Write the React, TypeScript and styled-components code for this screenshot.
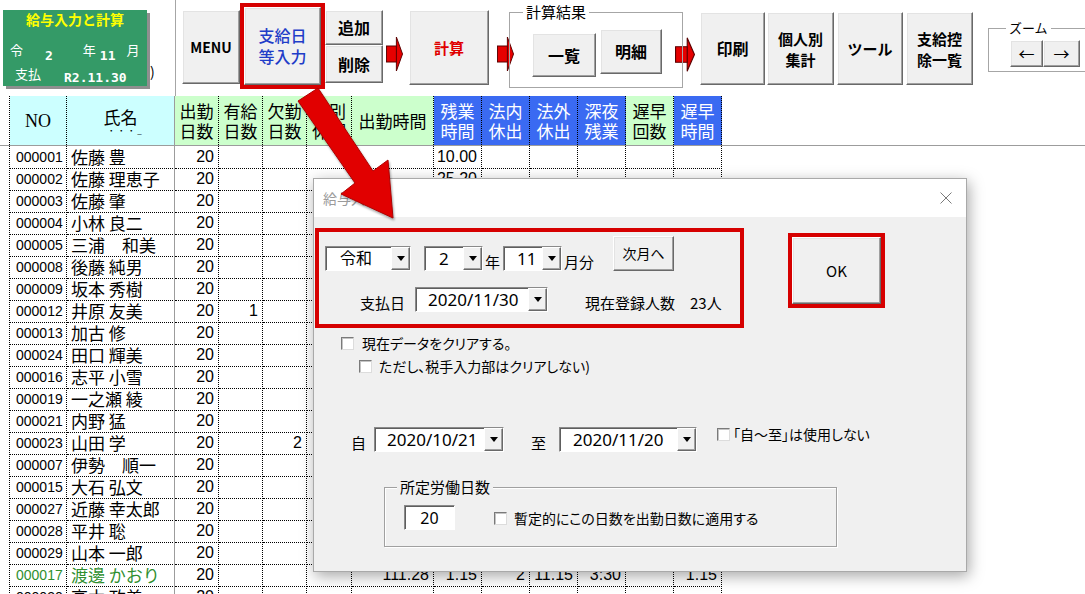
import React from 'react';
import styled, { createGlobalStyle, css } from 'styled-components';

const JP = `"Noto Sans CJK JP", "Noto Sans", sans-serif`;
const LATIN = `"Liberation Sans", "Noto Sans CJK JP", sans-serif`;
const UI = `"Noto Sans", "Noto Sans CJK JP", sans-serif`;
const COLS = '10px 57px 108px 44px 44px 44px 45px 82px 48px 48px 48px 48px 48px 48px 1fr';

const GREEN = '#ccffcc';
const BLUE = '#3a6af2';
const CYAN = '#ccffff';

const GlobalStyle = createGlobalStyle`
  * { box-sizing: border-box; }
  html, body { margin: 0; padding: 0; background: #fff; }
  body { font-family: ${JP}; color: #000; }
`;

const Screen = styled.div`
  position: relative;
  width: 1085px;
  height: 594px;
  overflow: hidden;
  background: #fff;
`;

/* ---------- toolbar ---------- */

const Toolbar = styled.div`
  display: flex;
  align-items: flex-start;
  height: 96px;
`;

const TitleCard = styled.div`
  flex: none;
  margin: 10px 0 0 3px;
  width: 144px;
  height: 76px;
  background: #349a67;
  box-shadow: 3px 3px 0 #8f8f8f;
  color: #fff;
`;

const CardTitle = styled.div`
  color: #ffff00;
  font-weight: 700;
  font-size: 14px;
  line-height: 18px;
  text-align: center;
`;

const CardLine = styled.div<{ $mt: number; $pl: number }>`
  display: flex;
  align-items: flex-start;
  height: 18px;
  margin-top: ${p => p.$mt}px;
  padding-left: ${p => p.$pl}px;
`;

const CardWord = styled.span<{ $ml?: number }>`
  margin-left: ${p => p.$ml ?? 0}px;
  font-size: 13px;
  line-height: 18px;
`;

const CardNum = styled.span<{ $ml?: number; $dy: number }>`
  margin: ${p => p.$dy}px 0 0 ${p => p.$ml ?? 0}px;
  font-family: "DejaVu Sans Mono", monospace;
  font-weight: 700;
  font-size: 13px;
  line-height: 18px;
`;

const Paren = styled.div`
  flex: none;
  width: 28px;
  margin-top: 62px;
  padding-left: 3px;
  font-size: 14px;
  line-height: 18px;
`;

const PaneLine = styled.div`
  flex: none;
  width: 1px;
  height: 96px;
  background: #a6a6a6;
`;

const Btn = styled.button<{
  $w: number;
  $h: number;
  $mt?: number;
  $ml?: number;
  $color?: string;
  $fs?: number;
  $weight?: number;
}>`
  flex: none;
  display: flex;
  align-items: center;
  justify-content: center;
  width: ${p => p.$w}px;
  height: ${p => p.$h}px;
  margin: ${p => p.$mt ?? 0}px 0 0 ${p => p.$ml ?? 0}px;
  padding: 0;
  background: #f0f0f0;
  border: 1px solid;
  border-color: #ffffff #696969 #696969 #ffffff;
  box-shadow: inset -1px -1px 0 #a0a0a0, inset 1px 1px 0 #e3e3e3;
  font-family: ${JP};
  font-weight: ${p => p.$weight ?? 700};
  font-size: ${p => p.$fs ?? 16}px;
  line-height: 21px;
  color: ${p => p.$color ?? '#000'};
  text-align: center;
  white-space: nowrap;
  cursor: default;
`;

const Mark = styled.div<{ $mt?: number; $ml?: number }>`
  flex: none;
  display: flex;
  margin: ${p => p.$mt ?? 0}px 0 0 ${p => p.$ml ?? 0}px;
  border: 4px solid #d60000;
`;

const BtnStack = styled.div`
  flex: none;
  display: flex;
  flex-direction: column;
  margin-top: 10px;
`;

const FlowArrowSvg = styled.svg<{ $mt: number; $ml: number }>`
  flex: none;
  margin: ${p => p.$mt}px 0 0 ${p => p.$ml}px;
  overflow: visible;
`;

const FlowArrow = ({ w, h, mt, ml }: { w: number; h: number; mt: number; ml: number }) => (
  <FlowArrowSvg width={w} height={h} viewBox="0 0 18 36" preserveAspectRatio="none" $mt={mt} $ml={ml}>
    <rect x="0.5" y="10" width="11" height="16" fill="#e60000" stroke="#5a0000" />
    <polygon points="11,1 17.5,18 11,35" fill="#e60000" stroke="#5a0000" strokeLinejoin="round" />
  </FlowArrowSvg>
);

const Frame = styled.div<{ $w: number; $h: number; $mt: number; $ml: number; $pl: number; $pt: number }>`
  position: relative;
  flex: none;
  display: flex;
  align-items: flex-start;
  width: ${p => p.$w}px;
  height: ${p => p.$h}px;
  margin: ${p => p.$mt}px 0 0 ${p => p.$ml}px;
  padding: ${p => p.$pt}px 0 0 ${p => p.$pl}px;
  border: 1px solid #a6a6a6;
`;

const FrameLabel = styled.span<{ $left: number; $fs: number; $bg: string }>`
  position: absolute;
  top: -10px;
  left: ${p => p.$left}px;
  padding: 0 3px;
  background: ${p => p.$bg};
  font-size: ${p => p.$fs}px;
  line-height: 18px;
  white-space: nowrap;
`;

/* ---------- sheet ---------- */

const GridRow = styled.div<{ $h: number }>`
  display: grid;
  grid-template-columns: ${COLS};
  height: ${p => p.$h}px;
`;

const Gutter = styled.div`
  border-right: 1px dotted #000;
`;

const HeadCell = styled.div<{ $bg: string; $fg?: string; $pane?: boolean; $serif?: boolean }>`
  display: flex;
  flex-direction: column;
  align-items: center;
  justify-content: center;
  background: ${p => p.$bg};
  color: ${p => p.$fg ?? '#000'};
  border-right: 1px ${p => (p.$pane ? 'solid #9c9c9c' : 'dotted #000')};
  font-family: ${p => (p.$serif ? `"Liberation Serif", serif` : JP)};
  font-size: ${p => (p.$serif ? 18 : 17)}px;
  line-height: 20px;
  white-space: nowrap;
`;

const Ruby = styled.span`
  font-size: 8px;
  line-height: 8px;
  letter-spacing: 2px;
  margin-left: 10px;
`;

const Body = styled.div`
  border-top: 1px solid #9c9c9c;
`;

const Cell = styled.div<{ $kind: 'no' | 'name' | 'num' | 'blank'; $green?: boolean; $pane?: boolean }>`
  white-space: nowrap;
  border-right: 1px ${p => (p.$pane ? 'solid #9c9c9c' : 'dotted #000')};
  border-bottom: 1px dotted #000;
  color: ${p => (p.$green ? '#2f8f2f' : '#000')};
  line-height: 22px;
  ${p =>
    p.$kind === 'no' &&
    css`
      font-family: ${LATIN};
      font-size: 14px;
      padding-left: 6px;
    `}
  ${p =>
    p.$kind === 'name' &&
    css`
      font-family: ${JP};
      font-size: 17px;
      line-height: 21px;
      padding-left: 4px;
    `}
  ${p =>
    p.$kind === 'num' &&
    css`
      font-family: ${LATIN};
      font-size: 16px;
      text-align: right;
      padding-right: 4px;
    `}
  ${p =>
    p.$kind === 'blank' &&
    css`
      border: none;
    `}
`;

/* ---------- dialog ---------- */

const Dialog = styled.div`
  position: absolute;
  left: 313px;
  top: 178px;
  width: 654px;
  height: 394px;
  display: flex;
  flex-direction: column;
  background: #f0f0f0;
  border: 1px solid #a9a9a9;
  box-shadow: 2px 4px 14px rgba(0, 0, 0, 0.35);
  font-family: ${JP};
  font-feature-settings: 'palt';
`;

const TitleBar = styled.div`
  flex: none;
  display: flex;
  align-items: center;
  justify-content: space-between;
  height: 38px;
  padding: 0 14px 0 9px;
  background: #fff;
  color: #9b9b9b;
  font-size: 14px;
`;

const DialogBody = styled.div`
  flex: 1;
  display: flex;
  flex-direction: column;
  align-items: flex-start;
`;

const TopRow = styled.div`
  display: flex;
  align-items: flex-start;
`;

const RedBox = styled.div`
  flex: none;
  display: flex;
  flex-direction: column;
  width: 429px;
  height: 100px;
  margin: 11px 0 0 1px;
  padding: 4px 0 0 6px;
  border: 4px solid #d60000;
`;

const FieldRow = styled.div<{ $h: number; $mt?: number; $pl?: number }>`
  display: flex;
  align-items: flex-end;
  height: ${p => p.$h}px;
  margin-top: ${p => p.$mt ?? 0}px;
  padding-left: ${p => p.$pl ?? 0}px;
`;

const Label = styled.span<{ $ml?: number; $fs?: number }>`
  flex: none;
  margin-left: ${p => p.$ml ?? 0}px;
  font-size: ${p => p.$fs ?? 15}px;
  line-height: 18px;
  white-space: nowrap;
`;

const Combo = styled.div<{ $w: number; $ml?: number }>`
  flex: none;
  display: flex;
  width: ${p => p.$w}px;
  height: 25px;
  margin-left: ${p => p.$ml ?? 0}px;
  background: #fff;
  border: 1px solid;
  border-color: #8a8a8a #ffffff #ffffff #8a8a8a;
  box-shadow: inset 1px 1px 0 #5e5e5e;
`;

const ComboText = styled.div<{ $fs: number; $pl?: number }>`
  flex: 1;
  overflow: hidden;
  padding-left: ${p => p.$pl ?? 13}px;
  font-family: ${UI};
  font-size: ${p => p.$fs}px;
  line-height: 23px;
  white-space: nowrap;
`;

const DropBtn = styled.div`
  flex: none;
  display: flex;
  align-items: center;
  justify-content: center;
  width: 19px;
  background: #f0f0f0;
  border: 1px solid;
  border-color: #ffffff #696969 #696969 #ffffff;
  box-shadow: inset -1px -1px 0 #a0a0a0;
  &::after {
    content: '';
    border-left: 4.5px solid transparent;
    border-right: 4.5px solid transparent;
    border-top: 5px solid #000;
  }
`;

const CheckRow = styled.div<{ $mt?: number; $pl?: number; $gap: number }>`
  display: flex;
  align-items: center;
  height: 16px;
  margin-top: ${p => p.$mt ?? 0}px;
  padding-left: ${p => p.$pl ?? 0}px;
  gap: ${p => p.$gap}px;
  font-size: 14px;
  line-height: 16px;
  white-space: nowrap;
`;

const CheckBox = styled.span`
  flex: none;
  width: 13px;
  height: 13px;
  background: #fff;
  border: 1px solid;
  border-color: #7a7a7a #dcdcdc #dcdcdc #7a7a7a;
  box-shadow: inset 1px 1px 0 #c4c4c4;
`;

const CheckInline = styled(CheckRow)<{ $ml: number }>`
  align-self: flex-start;
  height: 14px;
  margin-left: ${p => p.$ml}px;
`;

const WorkDaysBox = styled.div`
  position: relative;
  display: flex;
  align-items: center;
  width: 453px;
  height: 60px;
  margin: 35px 0 0 70px;
  padding: 0 0 15px 19px;
  border: 1px solid #a0a0a0;
  box-shadow: inset 1px 1px 0 #fff, 1px 1px 0 #fff;
`;

const NumInput = styled.div`
  flex: none;
  width: 51px;
  height: 25px;
  margin-top: 16px;
  background: #fff;
  border: 1px solid;
  border-color: #8a8a8a #ffffff #ffffff #8a8a8a;
  box-shadow: inset 1px 1px 0 #5e5e5e;
  font-family: ${UI};
  font-size: 16px;
  line-height: 24px;
  text-align: center;
`;

const Overlay = styled.svg`
  position: absolute;
  left: 0;
  top: 0;
  width: 1085px;
  height: 594px;
  pointer-events: none;
  filter: drop-shadow(1px 2px 1px rgba(0, 0, 0, 0.35));
`;

/* ---------- data ---------- */

const HEADS: { t: string[]; bg: string; fg?: string }[] = [
  { t: ['出勤', '日数'], bg: GREEN },
  { t: ['有給', '日数'], bg: GREEN },
  { t: ['欠勤', '日数'], bg: GREEN },
  { t: ['特別', '休暇'], bg: GREEN },
  { t: ['出勤時間'], bg: GREEN },
  { t: ['残業', '時間'], bg: BLUE, fg: '#fff' },
  { t: ['法内', '休出'], bg: BLUE, fg: '#fff' },
  { t: ['法外', '休出'], bg: BLUE, fg: '#fff' },
  { t: ['深夜', '残業'], bg: BLUE, fg: '#fff' },
  { t: ['遅早', '回数'], bg: GREEN },
  { t: ['遅早', '時間'], bg: BLUE, fg: '#fff' },
];

const r = (no: string, name: string, extra: Record<number, string> = {}, green = false) => ({
  no,
  name,
  green,
  v: Array.from({ length: 11 }, (_, i) => extra[i] ?? (i === 0 ? '20' : '')),
});

const ROWS = [
  r('000001', '佐藤 豊', { 5: '10.00' }),
  r('000002', '佐藤 理恵子', { 5: '25.20' }),
  r('000003', '佐藤 肇'),
  r('000004', '小林 良二'),
  r('000005', '三浦　和美'),
  r('000008', '後藤 純男'),
  r('000009', '坂本 秀樹'),
  r('000012', '井原 友美', { 1: '1' }),
  r('000013', '加古 修'),
  r('000024', '田口 輝美'),
  r('000016', '志平 小雪'),
  r('000019', '一之瀬 綾'),
  r('000021', '内野 猛'),
  r('000023', '山田 学', { 2: '2' }),
  r('000007', '伊勢　順一'),
  r('000015', '大石 弘文'),
  r('000027', '近藤 幸太郎'),
  r('000028', '平井 聡'),
  r('000029', '山本 一郎'),
  r('000017', '渡邊 かおり', { 4: '111.28', 5: '1.15', 6: '2', 7: '11.15', 8: '3:30', 10: '1.15' }, true),
  r('000030', '高木 政美'),
];

const Dropdown = ({ w, ml, fs, text, pl }: { w: number; ml?: number; fs: number; text: string; pl?: number }) => (
  <Combo $w={w} $ml={ml}>
    <ComboText $fs={fs} $pl={pl}>{text}</ComboText>
    <DropBtn />
  </Combo>
);

const App = () => {
  return (
    <Screen>
      <GlobalStyle />
      <Toolbar>
        <TitleCard>
          <CardTitle>給与入力と計算</CardTitle>
          <CardLine $mt={13} $pl={7}>
            <CardWord>令</CardWord>
            <CardNum $ml={22} $dy={6}>2</CardNum>
            <CardWord $ml={30}>年</CardWord>
            <CardNum $ml={4} $dy={6}>11</CardNum>
            <CardWord $ml={11}>月</CardWord>
          </CardLine>
          <CardLine $mt={6} $pl={12}>
            <CardWord>支払</CardWord>
            <CardNum $ml={23} $dy={4}>R2.11.30</CardNum>
          </CardLine>
        </TitleCard>
        <Paren>)</Paren>
        <PaneLine />
        <Btn $w={58} $h={74} $mt={10} $ml={6} $fs={14}>MENU</Btn>
        <Mark $mt={3}>
          <Btn $w={77} $h={78} $color="#1f3dc8" $weight={500}>
            支給日
            <br />
            等入力
          </Btn>
        </Mark>
        <BtnStack>
          <Btn $w={58} $h={35}>追加</Btn>
          <Btn $w={58} $h={38}>削除</Btn>
        </BtnStack>
        <FlowArrow w={17} h={36} mt={36} ml={3} />
        <Btn $w={80} $h={75} $mt={10} $ml={6} $color="#e00000" $fs={15}>計算</Btn>
        <FlowArrow w={17} h={36} mt={36} ml={8} />
        <Frame $w={174} $h={76} $mt={12} $ml={-5} $pl={22} $pt={0}>
          <FrameLabel $left={13} $fs={15} $bg="#fff">計算結果</FrameLabel>
          <Btn $w={64} $h={44} $mt={20}>一覧</Btn>
          <Btn $w={62} $h={45} $mt={16} $ml={4}>明細</Btn>
        </Frame>
        <FlowArrow w={20} h={35} mt={37} ml={-8} />
        <Btn $w={65} $h={73} $mt={12} $ml={5}>印刷</Btn>
        <Btn $w={67} $h={73} $mt={12} $ml={2} $fs={15}>
          個人別
          <br />
          集計
        </Btn>
        <Btn $w={66} $h={73} $mt={12} $ml={3} $fs={15}>ツール</Btn>
        <Btn $w={67} $h={73} $mt={12} $ml={3} $fs={15}>
          支給控
          <br />
          除一覧
        </Btn>
        <Frame $w={120} $h={44} $mt={28} $ml={15} $pl={21} $pt={11}>
          <FrameLabel $left={17} $fs={13} $bg="#fff">ズーム</FrameLabel>
          <Btn $w={33} $h={27} $weight={400}>←</Btn>
          <Btn $w={37} $h={27} $weight={400}>→</Btn>
        </Frame>
      </Toolbar>

      <GridRow $h={49}>
        <Gutter />
        <HeadCell $bg={CYAN} $serif>NO</HeadCell>
        <HeadCell $bg={CYAN} $pane>
          <span>氏名</span>
          <Ruby>・・・_</Ruby>
        </HeadCell>
        {HEADS.map((h, i) => (
          <HeadCell key={i} $bg={h.bg} $fg={h.fg}>
            {h.t.map(line => (
              <span key={line}>{line}</span>
            ))}
          </HeadCell>
        ))}
        <div />
      </GridRow>

      <Body>
        {ROWS.map(row => (
          <GridRow $h={22} key={row.no}>
            <Gutter />
            <Cell $kind="no" $green={row.green}>{row.no}</Cell>
            <Cell $kind="name" $green={row.green} $pane>{row.name}</Cell>
            {row.v.map((val, i) => (
              <Cell $kind="num" key={i}>{val}</Cell>
            ))}
            <Cell $kind="blank" />
          </GridRow>
        ))}
      </Body>

      <Dialog>
        <TitleBar>
          <span>給与入力</span>
          <svg width="12" height="12" viewBox="0 0 12 12">
            <path d="M0.5 0.5 L11.5 11.5 M11.5 0.5 L0.5 11.5" stroke="#7a7a7a" strokeWidth="1" />
          </svg>
        </TitleBar>
        <DialogBody>
          <TopRow>
            <RedBox>
              <FieldRow $h={35}>
                <Dropdown w={86} fs={16} text="令和" pl={14} />
                <Dropdown w={59} ml={13} fs={17} text="2" pl={14} />
                <Label $ml={2}>年</Label>
                <Dropdown w={59} ml={3} fs={17} text="11" pl={13} />
                <Label $ml={2}>月分</Label>
                <Btn $w={61} $h={35} $ml={19} $fs={14} $weight={400}>次月へ</Btn>
              </FieldRow>
              <FieldRow $h={25} $mt={16} $pl={35}>
                <Label>支払日</Label>
                <Dropdown w={133} ml={10} fs={17} text="2020/11/30" pl={12} />
                <Label $ml={37}>現在登録人数</Label>
                <Label $ml={15}>23人</Label>
              </FieldRow>
            </RedBox>
            <Mark $mt={16} $ml={44}>
              <Btn $w={89} $h={67} $fs={15} $weight={400}>OK</Btn>
            </Mark>
          </TopRow>

          <CheckRow $mt={7} $pl={27} $gap={8}>
            <CheckBox />
            <span>現在データをクリアする。</span>
          </CheckRow>
          <CheckRow $mt={7} $pl={45} $gap={7}>
            <CheckBox />
            <span>ただし、税手入力部はクリアしない)</span>
          </CheckRow>

          <FieldRow $h={25} $mt={53} $pl={37}>
            <Label>自</Label>
            <Dropdown w={130} ml={8} fs={17} text="2020/10/21" pl={12} />
            <Label $ml={27}>至</Label>
            <Dropdown w={138} ml={13} fs={17} text="2020/11/20" pl={13} />
            <CheckInline $ml={20} $gap={3}>
              <CheckBox />
              <span>「自～至」は使用しない</span>
            </CheckInline>
          </FieldRow>

          <WorkDaysBox>
            <FrameLabel $left={12} $fs={15} $bg="#f0f0f0">所定労働日数</FrameLabel>
            <NumInput>20</NumInput>
            <CheckRow $pl={39} $gap={7} style={{ marginTop: 17 }}>
              <CheckBox />
              <span>暫定的にこの日数を出勤日数に適用する</span>
            </CheckRow>
          </WorkDaysBox>
        </DialogBody>
      </Dialog>

      <Overlay viewBox="0 0 1085 594">
        <polygon
          points="318,88 373,171 388,160 393,218 341,194 355,183 298,101"
          fill="#e10000"
          stroke="#b00000"
          strokeWidth="1"
          strokeLinejoin="round"
        />
      </Overlay>
    </Screen>
  );
};

export default App;
